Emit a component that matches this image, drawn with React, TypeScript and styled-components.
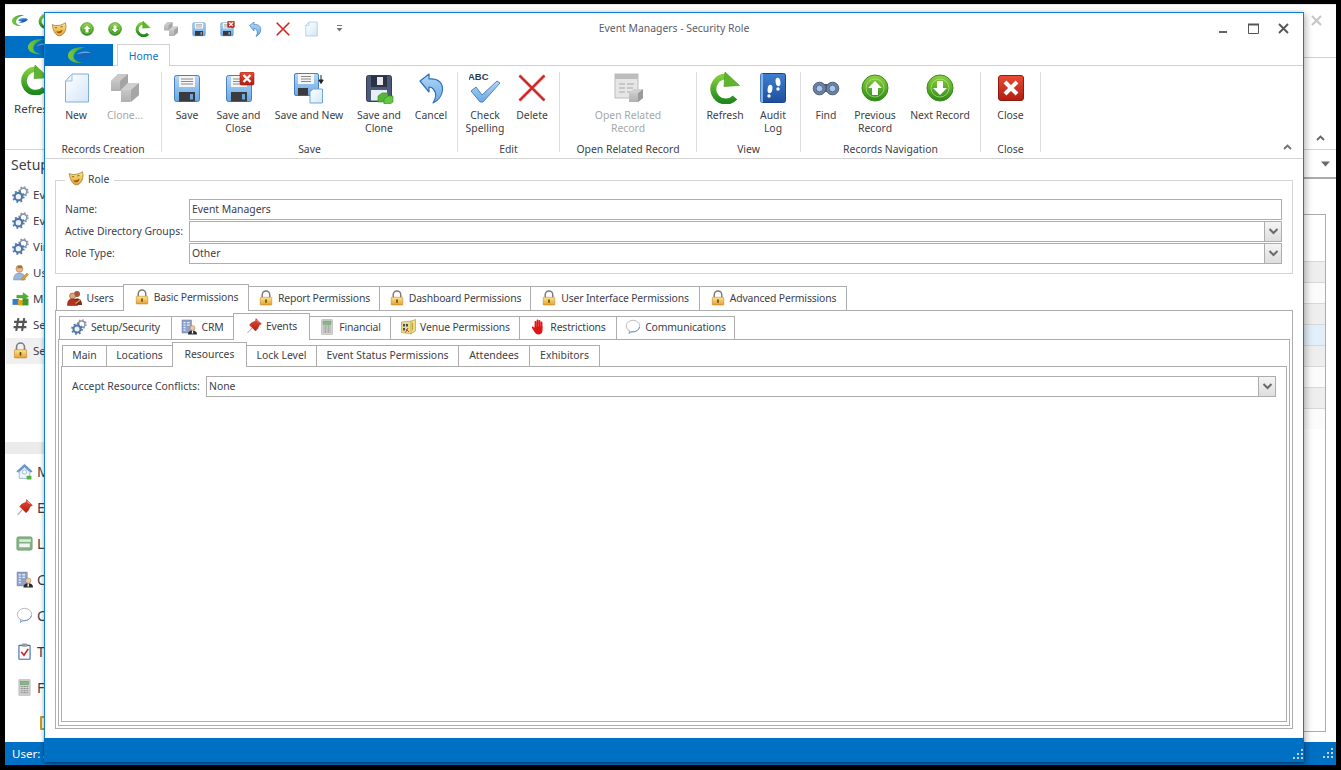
import React from "react";
import styled, { createGlobalStyle } from "styled-components";

const FONT = `"Noto Sans", "Open Sans", Arial, sans-serif`;
const INK = "#3c4048";
const LINE = "#adadad";
const BASE = "10.4px";

const Global = createGlobalStyle`
  html, body { margin: 0; background: #000; height: 100%; overflow: hidden; }
  * { box-sizing: border-box; }
  body { font-family: ${FONT}; font-size: ${BASE}; color: ${INK}; }
`;

/* ---------- icon drawings ---------- */
const Sv: React.FC<{ s?: number; children: React.ReactNode }> = ({ s = 32, children }) => (
  <svg width={s} height={s} viewBox="0 0 32 32" style={{ flex: "none", display: "block" }}>{children}</svg>
);
type IP = { s?: number };

const Gradients = () => (
  <svg width="0" height="0" style={{ position: "absolute" }}>
    <defs>
      <linearGradient id="gGreen" x1="0" y1="0" x2="0" y2="1"><stop offset="0" stopColor="#8ed23f" /><stop offset="1" stopColor="#2b8a17" /></linearGradient>
      <linearGradient id="gArc" x1="0" y1="0" x2="0" y2="1"><stop offset="0" stopColor="#7fce3c" /><stop offset="1" stopColor="#1f8a1c" /></linearGradient>
      <linearGradient id="gBlue" x1="0" y1="0" x2="0" y2="1"><stop offset="0" stopColor="#b4d7f6" /><stop offset="1" stopColor="#6aa8e4" /></linearGradient>
      <linearGradient id="gDeep" x1="0" y1="0" x2="0" y2="1"><stop offset="0" stopColor="#3f7fd0" /><stop offset="1" stopColor="#1d4f9e" /></linearGradient>
      <linearGradient id="gGold" x1="0" y1="0" x2="0" y2="1"><stop offset="0" stopColor="#fde48a" /><stop offset="1" stopColor="#e7a12f" /></linearGradient>
      <linearGradient id="gRed" x1="0" y1="0" x2="0" y2="1"><stop offset="0" stopColor="#ea4b34" /><stop offset="1" stopColor="#b11d10" /></linearGradient>
      <linearGradient id="gPage" x1="0" y1="0" x2="1" y2="1"><stop offset="0" stopColor="#ffffff" /><stop offset="1" stopColor="#d3e6f8" /></linearGradient>
      <linearGradient id="gGray" x1="0" y1="0" x2="0" y2="1"><stop offset="0" stopColor="#d4d4d4" /><stop offset="1" stopColor="#b0b0b0" /></linearGradient>
      <linearGradient id="gLogo" x1="0" y1="0" x2="1" y2="0"><stop offset="0" stopColor="#7ccb35" /><stop offset="1" stopColor="#2c9a4a" /></linearGradient>
    </defs>
  </svg>
);

const LogoMark: React.FC<{ w?: number; eye?: string }> = ({ w = 32, eye = "#1f5fb4" }) => (
  <svg width={w} height={w * 0.72} viewBox="0 0 32 23" style={{ display: "block", flex: "none" }}>
    <path d="M24 .5C12-1.500 0 4 0 12c0 6.500 9 11 22 10.500C12 21 7 17.500 8 12.500 9 7 15 2.500 24 .5z" fill="url(#gLogo)" />
    <path d="M12 10.500C17 6 25 5 32 8.500 28 14.500 20 17 13 14.500c3-.2 5.500-1.300 7-3-2.500.6-5.500.4-8-1z" fill={eye} />
    <path d="M12 10.500C17 6 25 5 32 8.500 26 8 18 8.500 12 10.500z" fill="#5aa8ea" />
  </svg>
);
const IPage = ({ s }: IP) => (
  <Sv s={s}><path d="M5.500 9 12 2H28.500V30H5.500z" fill="url(#gPage)" stroke="#7fb0da" /><path d="M5.500 9 12 2V9z" fill="#e8f2fb" stroke="#9cc3e4" /></Sv>
);
const ICubes = ({ s }: IP) => (
  <Sv s={s}>
    <path d="M2 9 9 2 19 2 19 12 11 19 2 19z" fill="url(#gGray)" />
    <path d="M2 9H11L19 2 9 2z" fill="#c9c9c9" /><path d="M11 9V19L19 12V2z" fill="#a4a4a4" />
    <path d="M12 18 19 11 30 11 30 23 21 30 12 30z" fill="url(#gGray)" />
    <path d="M12 18H22L30 11 19 11z" fill="#cfcfcf" /><path d="M22 18V30L30 23V11z" fill="#a6a6a6" />
  </Sv>
);
const FloppyBase: React.FC<{ dark?: boolean }> = ({ dark }) => (
  <>
    <rect x="3.500" y="3.500" width="25" height="26" rx="2" fill={dark ? "#4c5a78" : "url(#gBlue)"} stroke={dark ? "#333e55" : "#4a80bc"} />
    <rect x="8" y="4" width="16" height="11" fill={dark ? "#2a3245" : "#f5f5f5"} />
    {dark ? <rect x="14" y="5" width="6" height="8" fill="#e8e8e8" /> : <path d="M10 7h12M10 9.500h12M10 12h12" stroke="#8a8a8a" />}
    <rect x="8" y={dark ? 18 : 20} width="16" height={dark ? 10.5 : 9.5} fill={dark ? "#e8eef6" : "#3b3b3e"} />
    {!dark && <rect x="19" y="22" width="3" height="5.500" fill="#6aa7e2" />}
  </>
);
const ISave = ({ s }: IP) => <Sv s={s}><FloppyBase /></Sv>;
const ISaveX = ({ s }: IP) => (
  <Sv s={s}>
    <FloppyBase />
    <rect x="17" y="0" width="14" height="13" rx="1.500" fill="url(#gRed)" stroke="#a01c10" strokeWidth=".6" />
    <path d="M20.500 3 27.500 10M27.500 3 20.500 10" stroke="#fff" strokeWidth="2.400" />
  </Sv>
);
const ISaveNew = ({ s }: IP) => (
  <Sv s={s}>
    <rect x="1.500" y="1.500" width="24" height="22" rx="1.500" fill="url(#gBlue)" stroke="#4a80bc" />
    <rect x="5" y="2" width="16" height="10" fill="#f5f5f5" />
    <path d="M8 4.500h10M8 7h10M8 9.500h10" stroke="#8a8a8a" />
    <rect x="5" y="16" width="10" height="7.500" fill="#3b3b3e" />
    <path d="M17 20 20 17H29.500V31H17z" fill="url(#gPage)" stroke="#6fa6d6" />
    <path d="M28 3 V10M25.800 8 28 11.500 30.200 8z" stroke="#222" fill="#222" strokeWidth="1" />
  </Sv>
);
const ISaveClone = ({ s }: IP) => (
  <Sv s={s}>
    <FloppyBase dark />
    <path d="M15 24l4-3h6v6l-4 3h-6z" fill="#56b53a" stroke="#2f8a1e" strokeWidth=".6" />
    <path d="M21 27l4-3h5v6l-3 2h-6z" fill="#69c545" stroke="#2f8a1e" strokeWidth=".6" />
  </Sv>
);
const IUndo = ({ s }: IP) => (
  <Sv s={s}>
    <path d="M5 9 14 2V7C23 6 28 11 27.500 18 27 24 23 29 18 31 21 26 21.500 21 19 18 17.500 15.500 16 15 14 15V20z" fill="url(#gBlue)" stroke="#2f70b8" strokeWidth="1.200" strokeLinejoin="round" />
  </Sv>
);
const IRedX = ({ s }: IP) => (
  <Sv s={s}>
    <path d="M3.500 3.500 28.500 28.500M28.500 3.500 3.500 28.500" stroke="#7d2020" strokeOpacity=".3" strokeWidth="3.600" />
    <path d="M3.500 3.500 28.500 28.500M28.500 3.500 3.500 28.500" stroke="#d92020" strokeWidth="2.300" />
  </Sv>
);
const ICheckAbc = ({ s }: IP) => (
  <Sv s={s}>
    <text x="-1" y="8" fontFamily="Liberation Sans, sans-serif" fontWeight="700" fontSize="9.500" fill="#2c3a5a">ABC</text>
    <path d="M2 19 7 15 13 23 28 9 31 11 14 30 11 30z" fill="url(#gBlue)" stroke="#3f79b8" strokeWidth=".9" strokeLinejoin="round" />
  </Sv>
);
const IOpenRelated = ({ s }: IP) => (
  <Sv s={s}>
    <rect x="3" y="2" width="23" height="24" fill="#e6e6e6" stroke="#bdbdbd" />
    <rect x="3" y="2" width="23" height="5" fill="#bdbdbd" />
    <path d="M7 12h6M15 12h7M7 16h6M15 16h6M7 20h6M15 20h4" stroke="#a8a8a8" />
    <path d="M17 21 22 17H31V26L26 30H17z" fill="url(#gGray)" />
    <path d="M26 21V30L31 26V17z" fill="#9a9a9a" /><path d="M17 21H26L31 17H22z" fill="#d0d0d0" />
  </Sv>
);
const IRefresh = ({ s }: IP) => (
  <Sv s={s}>
    <path d="M26 25.500A12.500 12.500 0 1 1 17 4.500" fill="none" stroke="url(#gArc)" strokeWidth="6" />
    <path d="M16 0 30.500 13.500 15 14.500z" fill="#5fb52e" stroke="#3f9620" strokeWidth=".6" />
  </Sv>
);
const IAudit = ({ s }: IP) => (
  <Sv s={s}>
    <rect x="3.500" y="1.500" width="25" height="29" rx="2" fill="url(#gDeep)" stroke="#1b4486" />
    <rect x="3.500" y="1.500" width="2.500" height="29" fill="#7fb3ea" />
    <ellipse cx="13" cy="17" rx="2.400" ry="4.200" fill="#fff" transform="rotate(8 13 17)" /><circle cx="12" cy="24" r="1.700" fill="#fff" />
    <ellipse cx="21" cy="10" rx="2.400" ry="4.200" fill="#fff" transform="rotate(-8 21 10)" /><circle cx="21" cy="17" r="1.700" fill="#fff" />
  </Sv>
);
const IFind = ({ s }: IP) => (
  <Sv s={s}>
    <path d="M13 12h6v8h-6z" fill="#4a5a70" />
    <circle cx="9.500" cy="16.500" r="6.300" fill="#6d83a5" stroke="#4e5d78" /><circle cx="9.500" cy="16.500" r="3.400" fill="#a9c7e6" stroke="#53688a" />
    <circle cx="22.500" cy="16.500" r="6.300" fill="#6d83a5" stroke="#4e5d78" /><circle cx="22.500" cy="16.500" r="3.400" fill="#a9c7e6" stroke="#53688a" />
  </Sv>
);
const IArrow: React.FC<IP & { down?: boolean }> = ({ s, down }) => (
  <Sv s={s}>
    <circle cx="16" cy="16" r="13" fill="url(#gGreen)" stroke="#3a8a1c" />
    <circle cx="16" cy="16" r="9" fill="none" stroke="#c8eea0" strokeOpacity=".6" />
    <path d={down ? "M16 23 23 16H19V9H13V16H9z" : "M16 9 23 16H19V23H13V16H9z"} fill="#fff" />
  </Sv>
);
const IClose = ({ s }: IP) => (
  <Sv s={s}>
    <rect x="3.500" y="3.500" width="25" height="25" rx="2.500" fill="url(#gRed)" stroke="#8f1a10" />
    <path d="M10 10 22 22M22 10 10 22" stroke="#fff" strokeWidth="4" />
  </Sv>
);
const ILock = ({ s }: IP) => (
  <Sv s={s}>
    <path d="M8.500 15V9.500a7.500 7.500 0 0 1 15 0V15" fill="none" stroke="#7c7c7c" strokeWidth="3" />
    <rect x="4.500" y="14.500" width="23" height="15.500" rx="1" fill="url(#gGold)" stroke="#b57a1c" />
    <rect x="14.500" y="19" width="3" height="6.500" fill="#5a4010" />
  </Sv>
);
const IMask = ({ s }: IP) => (
  <Sv s={s}>
    <path d="M2.500 7C10 11 20 9 29 3.500 31.500 14 29 25 20 29 11 32.500 4 21 2.500 7z" fill="url(#gGold)" stroke="#8c6a26" strokeWidth="1.300" />
    <path d="M7 13.500q3-2 6 0-3 1.500-6 0zM18 12q3-2.500 6-1-3 2.500-6 1z" fill="#5b4214" />
    <path d="M10 20q6 3 13-3-1 7-7 7.500-4 0-6-4.500z" fill="#8c5f1a" />
  </Sv>
);
const IUsers = ({ s }: IP) => (
  <Sv s={s}>
    <circle cx="20" cy="8" r="6" fill="#a8553a" /><path d="M11 30c0-9 3-13 9-13s10 4 10 13z" fill="#7d2c1e" />
    <circle cx="11" cy="12" r="6" fill="#e3a878" stroke="#7a3b20" /><path d="M1 31c0-10 3-13 10-13s10 4 10 13z" fill="#b5301e" stroke="#6d1a10" />
    <path d="M17 27 26 20" stroke="#d89a3a" strokeWidth="3" />
  </Sv>
);
const IGear = ({ s }: IP) => (
  <Sv s={s}>
    <circle cx="21.500" cy="10.500" r="6.500" fill="none" stroke="#8a98ac" strokeWidth="3" />
    <circle cx="21.500" cy="10.500" r="8.500" fill="none" stroke="#8a98ac" strokeWidth="3" strokeDasharray="3 3.670" />
    <circle cx="12" cy="20" r="7" fill="#eef2f8" stroke="#4f78a8" strokeWidth="4" />
    <circle cx="12" cy="20" r="10" fill="none" stroke="#4f78a8" strokeWidth="3.500" strokeDasharray="3.500 4.350" />
  </Sv>
);
const ICrm = ({ s }: IP) => (
  <Sv s={s}>
    <rect x="2" y="2" width="19" height="26" fill="#8ea2cc" stroke="#6a7a9e" />
    <path d="M5 7h4M12 7h5M5 12h4M12 12h5M5 17h4M5 22h4" stroke="#e6ecf6" strokeWidth="2.500" />
    <circle cx="23" cy="18" r="5" fill="#f2c89c" stroke="#8a6a40" strokeWidth=".8" />
    <path d="M14 31c0-6 4-8 9-8s9 2 9 8z" fill="#2a2a2a" /><path d="M22 23h2l.5 6h-3z" fill="#fff" />
  </Sv>
);
const IPin = ({ s }: IP) => (
  <Sv s={s}>
    <path d="M3 30 12 20" stroke="#a8a8a8" strokeWidth="2" />
    <path d="M20 1 31 12 27 13.500 23.500 21 19 26 7 14 11 9.500 19 6z" fill="url(#gRed)" stroke="#a01812" strokeWidth=".8" />
    <path d="M21 4 26 9" stroke="#f5a090" strokeWidth="2" />
  </Sv>
);
const ICalc = ({ s }: IP) => (
  <Sv s={s}>
    <rect x="5.500" y="1.500" width="21" height="29" fill="#d2d2d2" stroke="#9a9a9a" />
    <rect x="8" y="4" width="16" height="7" fill="#86b682" stroke="#5f8a5c" strokeWidth=".6" />
    <path d="M9 14h14M9 18h14M9 22h14M9 26h14" stroke="#848484" strokeWidth="2" strokeDasharray="2 1" />
  </Sv>
);
const IVenue = ({ s }: IP) => (
  <Sv s={s}>
    <path d="M3 6 22 4 31 1V24L22 30 3 27z" fill="#ecdc84" stroke="#8f8540" />
    <path d="M22 4V30" stroke="#8f8540" />
    <path d="M6 10h4v5H6zM12 10h4v5h-4zM6 18h4v5H6z" fill="#3d4d70" />
    <path d="M12 20l6 6M16 18l-5 9" stroke="#d8352a" strokeWidth="2" />
    <path d="M25 8v14" stroke="#bba63a" strokeWidth="2" />
  </Sv>
);
const IHand = ({ s }: IP) => (
  <Sv s={s}>
    <path d="M11 17V6M15 16V3M19 16V4M23 17V7" stroke="#e01414" strokeWidth="3.600" strokeLinecap="round" />
    <path d="M9 15H25V23C25 28 21 31 17 31 13 31 11 29 9 26L4 18C3 16 5 14 7 16L9 18z" fill="#e01414" />
  </Sv>
);
const IChat = ({ s }: IP) => (
  <Sv s={s}>
    <ellipse cx="16" cy="14" rx="13.500" ry="11.500" fill="#fff" stroke="#a8a8a8" strokeWidth="1.500" />
    <path d="M29 16c-1 6-7 10-14 10-3 0-4 1-7 3 1-2 1-3 0-5" fill="none" stroke="#4a86c4" strokeWidth="1.500" />
  </Sv>
);
const IUserEdit = ({ s }: IP) => (
  <Sv s={s}>
    <circle cx="14" cy="9" r="6.500" fill="#e8b98a" stroke="#9a6a3a" /><path d="M11 4 18 3 19 8 10 8z" fill="#a8702c" />
    <path d="M3 30c0-9 4-13 11-13s11 4 11 13z" fill="#9ab8dc" stroke="#6a8aba" />
    <path d="M17 28 28 17 31 20 20 31z" fill="#e0a030" stroke="#9a6a1a" strokeWidth=".8" />
  </Sv>
);
const IModules = ({ s }: IP) => (
  <Sv s={s}>
    <rect x="1" y="17" width="12" height="11" fill="#2f7fd0" /><rect x="11" y="19" width="11" height="10" fill="#e0a020" />
    <rect x="20" y="16" width="11" height="13" fill="#3f9a2a" />
    <path d="M9 10H21V5L31 12 21 19V15H9z" fill="#50b030" stroke="#2f8a1c" strokeWidth=".7" />
  </Sv>
);
const IHash = ({ s }: IP) => (
  <Sv s={s}><path d="M12 4 8 28M23 4 19 28M4 11H28M3 21H27" stroke="#555" strokeWidth="4" /></Sv>
);
const IHouse = ({ s }: IP) => (
  <Sv s={s}>
    <path d="M1.500 16 16 2.500 30.500 16 27 17 16 7 5 17z" fill="#6a9ad0" stroke="#3f70ae" />
    <path d="M6 17 16 8 26 17V29H6z" fill="#eef4fb" stroke="#5a88be" />
    <circle cx="16" cy="17" r="4" fill="#fff" stroke="#5a88be" />
    <rect x="20" y="24" width="9" height="7" rx="1" fill="#5ab03a" />
  </Sv>
);
const ILicense = ({ s }: IP) => (
  <Sv s={s}>
    <rect x="1.500" y="3.500" width="29" height="25" rx="3" fill="#83b383" stroke="#5f8a5f" />
    <rect x="6" y="8" width="22" height="5" fill="#d8ead8" /><rect x="6" y="16" width="20" height="7" fill="#f3f3f3" />
  </Sv>
);
const IClip = ({ s }: IP) => (
  <Sv s={s}>
    <rect x="5.500" y="4.500" width="21" height="26" rx="1" fill="#f5f8fc" stroke="#3a68a8" strokeWidth="2" />
    <rect x="11" y="1" width="10" height="6" rx="1" fill="#9a9a9a" />
    <path d="M10 17 15 23 23 11" fill="none" stroke="#d42020" strokeWidth="3" />
  </Sv>
);
const Chevron = () => (
  <svg width="11" height="7" viewBox="0 0 11 7" style={{ display: "block" }}>
    <path d="M1.500 1 5.500 5 9.500 1" fill="none" stroke="#6a6a6a" strokeWidth="2" />
  </svg>
);
const Caret: React.FC<{ w?: number; c?: string }> = ({ w = 7, c = "#777" }) => (
  <svg width={w} height={w - 3} viewBox="0 0 7 4" style={{ display: "block" }}><path d="M0 0H7L3.500 4z" fill={c} /></svg>
);
const QuickMenu = () => (
  <svg width="7" height="7" viewBox="0 0 7 7" style={{ display: "block" }}><path d="M1 .5H6" stroke="#777" /><path d="M.5 3H6.500L3.500 6.500z" fill="#777" /></svg>
);
const ChevronUp: React.FC<{ c?: string }> = ({ c = "#707070" }) => (
  <svg width="9" height="6" viewBox="0 0 9 6" style={{ display: "block" }}><path d="M1 5 4.500 1.500 8 5" fill="none" stroke={c} strokeWidth="1.800" /></svg>
);
const Grip = () => (
  <svg width="11" height="11" viewBox="0 0 11 11" style={{ display: "block" }}>
    <path d="M8 0h2v2H8zM4 4h2v2H4zM8 4h2v2H8zM0 8h2v2H0zM4 8h2v2H4zM8 8h2v2H8z" fill="#c4d0da" />
  </svg>
);

/* ---------- background application ---------- */
const Desk = styled.div`
  width: 1341px; height: 770px; padding: 4px 5px 5px; background: #000;
  position: relative; overflow: hidden;
`;
const AppWindow = styled.div`
  height: 100%; width: 1331px; background: #fff; display: flex; flex-direction: column;
  border-top: 1px solid #e6e6e6;
`;
const AppTitleBar = styled.div`
  height: 31px; display: flex; align-items: center; padding: 0 14px 0 7px; gap: 10px; flex: none;
`;
const AppClose = styled.div`
  margin-left: auto; color: #c4c4c4; font-size: 0; line-height: 0;
`;
const AppTabRow = styled.div`
  height: 22px; flex: none; border-bottom: 1px solid #d0d0d0;
`;
const AppLogoTab = styled.div`
  width: 90px; height: 22px; background: #0070c4; display: flex; align-items: center; padding-left: 23px;
`;
const AppRibbon = styled.div`
  height: 92px; flex: none; border-bottom: 1px solid #d4d4d4; display: flex; justify-content: space-between;
  padding: 7px 11px 8px 9px;
`;
const AppRibbonButton = styled.div`
  width: 60px; font-size: 11.5px; display: flex; flex-direction: column; gap: 6px;
  svg { margin-left: 6px; }
`;
const AppRibbonCollapse = styled.div`
  align-self: flex-end;
`;
const AppBody = styled.div`
  flex: 1; display: flex; min-height: 0;
`;
const Sidebar = styled.aside`
  width: 300px; flex: none; display: flex; flex-direction: column;
`;
const SideTitle = styled.div`
  height: 30px; padding-left: 6px; font-size: 14px; line-height: 30px; flex: none; margin-bottom: 2px;
`;
const SideRow = styled.div<{ $on?: boolean }>`
  height: 26px; display: flex; align-items: center; gap: 4px; padding-left: 6px; font-size: 11.5px;
  margin-left: 1px; background: ${(p) => (p.$on ? "#f0f0f0" : "transparent")};
`;
const SideRule = styled.div`
  height: 12px; margin-top: 78px; background: #ebebeb; flex: none;
`;
const NavRow = styled.div`
  height: 36px; display: flex; align-items: center; gap: 4px; padding-left: 11px; font-size: 14px;
`;
const SubNavRow = styled.div`
  height: 37px; display: flex; align-items: center; padding-left: 35px;
`;
const Swatch = styled.span`
  width: 12px; height: 14px; border: 2px solid #c89a2c; border-radius: 1px; background: #fff6cf; display: block;
`;
const ListPane = styled.section`
  flex: 1; display: flex; flex-direction: column; min-width: 0;
`;
const ListHeader = styled.div`
  height: 29px; flex: none; display: flex; align-items: center; justify-content: flex-end; padding: 0 6px 0 0;
  border-bottom: 2px solid #acacac;
`;
const Grid = styled.div`
  flex: 1; margin: 35px 10px 10px 0; border: 1px solid #adadad; border-left: 0; padding-top: 46px; display: flex; flex-direction: column;
`;
const GridRow = styled.div<{ $tone: "gray" | "white" | "blue" }>`
  height: 21px; flex: none; border-top: 1px solid #d8d8d8;
  background: ${(p) => (p.$tone === "gray" ? "#eeeeee" : p.$tone === "blue" ? "#e2effa" : "#fbfbfb")};
`;
const StatusBar = styled.footer`
  height: 23px; flex: none; background: #0070c4; color: #fff; display: flex; align-items: center; justify-content: space-between;
  padding: 0 2px 0 7px; font-size: 11.5px;
`;

/* ---------- floating dialog ---------- */
const Dialog = styled.div`
  position: absolute; left: 44px; top: 12px; width: 1260px; height: 750px;
  background: #fff; border: 1px solid #0f7fd0; border-bottom: 0;
  box-shadow: 2px 2px 7px rgba(0,0,0,.28), -1px 0 3px rgba(0,0,0,.12);
  display: flex; flex-direction: column;
`;
const TitleBar = styled.header`
  height: 31px; flex: none; display: grid; grid-template-columns: 1fr auto 1fr; align-items: center;
`;
const QuickBar = styled.div`
  display: flex; align-items: center;
`;
const QuickCell = styled.div`
  width: 28px; height: 28px; display: flex; align-items: center; justify-content: center;
`;
const Title = styled.div`
  color: #5a5c6a; padding-bottom: 1px;
`;
const WinButtons = styled.div`
  display: flex; justify-content: flex-end; padding-right: 5px;
`;
const WinButton = styled.div`
  width: 30px; height: 28px; display: flex; align-items: center; justify-content: center;
`;
const TabRow = styled.div`
  height: 22px; flex: none; display: flex; gap: 4px; border-bottom: 1px solid #d0d0d0;
`;
const LogoTab = styled.div`
  width: 68px; height: 22px; background: #0070c4; display: flex; align-items: center; justify-content: center;
`;
const HomeTab = styled.div`
  width: 53px; height: 22px; background: #fff; border: 1px solid #d0d0d0; border-bottom: 0; color: #0a72c8;
  display: flex; align-items: center; justify-content: center;
`;
const Ribbon = styled.div`
  height: 93px; flex: none; display: flex; padding: 6px 10px 0 0; border-bottom: 1px solid #d4d4d4;
`;
const Group = styled.div<{ $w: number; $pad: number }>`
  width: ${(p) => p.$w}px; height: 80px; flex: none; border-right: 1px solid #dcdcdc; display: flex; flex-direction: column;
  padding-left: ${(p) => p.$pad}px;
`;
const GroupButtons = styled.div`
  height: 70px; display: flex; flex: none;
`;
const GroupCaption = styled.div<{ $pad: number }>`
  height: 14px; line-height: 15px; margin-left: -${(p) => p.$pad}px; text-align: center; margin-bottom: -4px; white-space: nowrap;
`;
const RButton = styled.div<{ $w: number; $off?: boolean }>`
  width: ${(p) => p.$w}px; flex: none; display: flex; flex-direction: column; align-items: center;
  text-align: center; line-height: 13px; color: ${(p) => (p.$off ? "#a6a6a6" : INK)};
`;
const RIcon = styled.div`
  height: 32px; margin-bottom: 5px; display: flex; align-items: center; justify-content: center;
`;
const RLabel = styled.div`
  white-space: pre-line;
`;
const Collapse = styled.div`
  margin-left: auto; align-self: flex-end; padding-bottom: 8px; margin-right: 1px;
`;
const Content = styled.div`
  flex: 1; min-height: 0; display: flex; flex-direction: column; padding: 11px 10px 9px 10px;
`;
const RoleBox = styled.fieldset`
  margin: 0; padding: 9px 10px 9px 9px; border: 1px solid #d4d4d4; flex: none; min-width: 0;
  display: grid; grid-template-columns: 124px 1fr; row-gap: 1px; align-items: center;
`;
const RoleLegend = styled.legend`
  display: flex; align-items: flex-start; gap: 4px; padding: 0 5px 0 3px; height: 20px; line-height: 19px;
`;
const Label = styled.label`
  white-space: nowrap; padding-bottom: 2px;
`;
const Field = styled.div`
  height: 21px; border: 1px solid ${LINE}; background: #fff; display: flex; align-items: flex-start; justify-content: space-between;
  padding-left: 2px; line-height: 19px;
`;
const DropButton = styled.div`
  width: 17px; height: 19px; background: linear-gradient(#f4f4f4, #dedede); border-left: 1px solid ${LINE};
  display: flex; align-items: center; justify-content: center;
`;
const TabSet = styled.div<{ $top?: number }>`
  display: flex; flex-direction: column; flex: 1; min-height: 0; min-width: 0;
  margin-top: ${(p) => p.$top ?? 0}px;
`;
const Strip = styled.div<{ $h: number; $pad: number }>`
  height: ${(p) => p.$h}px; flex: none; display: flex; align-items: flex-end; padding-left: ${(p) => p.$pad}px;
`;
const Tab = styled.div<{ $w: number; $h: number; $on?: boolean; $lift: number; $track: number }>`
  width: ${(p) => p.$w + 1}px; margin-right: -1px; flex: none;
  height: ${(p) => p.$h}px; margin-bottom: ${(p) => (p.$on ? -1 : 0)}px;
  ${(p) => (p.$on ? "position: relative; z-index: 2;" : "")}
  background: #fff; border: 1px solid ${LINE}; border-bottom: 0; padding-bottom: ${(p) => p.$lift}px;
  letter-spacing: ${(p) => p.$track}px;
  display: flex; align-items: center; justify-content: center; gap: 4px; white-space: nowrap;
`;
const Panel = styled.div<{ $pt: number; $pb: number; $px: number }>`
  flex: 1; min-height: 0; border: 1px solid ${LINE}; display: flex; flex-direction: column;
  padding: ${(p) => p.$pt}px ${(p) => p.$px}px ${(p) => p.$pb}px;
`;
const ConflictRow = styled.div`
  display: grid; grid-template-columns: 134px 1fr; align-items: center; padding: 9px 10px 0;
`;
const DialogStatus = styled.footer`
  height: 24px; flex: none; margin: 0 -1px; background: #0070c4; display: flex; align-items: flex-end; justify-content: flex-end;
  padding: 0 0 2px 0; box-shadow: 0 1px 2px rgba(0,0,0,.3);
`;

/* ---------- data ---------- */
type Btn = { l: string; w: number; i: React.ReactNode; off?: boolean };
const groups: { cap: string; w: number; pad: number; items: Btn[] }[] = [
  { cap: "Records Creation", w: 117, pad: 12, items: [
    { l: "New", w: 38, i: <IPage /> },
    { l: "Clone...", w: 60, i: <ICubes />, off: true } ] },
  { cap: "Save", w: 296, pad: 6, items: [
    { l: "Save", w: 38, i: <ISave /> },
    { l: "Save and\nClose", w: 65, i: <ISaveX /> },
    { l: "Save and New", w: 76, i: <ISaveNew /> },
    { l: "Save and\nClone", w: 64, i: <ISaveClone /> },
    { l: "Cancel", w: 40, i: <IUndo /> } ] },
  { cap: "Edit", w: 102, pad: 3, items: [
    { l: "Check\nSpelling", w: 48, i: <ICheckAbc /> },
    { l: "Delete", w: 46, i: <IRedX /> } ] },
  { cap: "Open Related Record", w: 137, pad: 0, items: [
    { l: "Open Related\nRecord", w: 136, i: <IOpenRelated />, off: true } ] },
  { cap: "View", w: 104, pad: 3, items: [
    { l: "Refresh", w: 50, i: <IRefresh /> },
    { l: "Audit\nLog", w: 46, i: <IAudit /> } ] },
  { cap: "Records Navigation", w: 180, pad: 3, items: [
    { l: "Find", w: 44, i: <IFind /> },
    { l: "Previous\nRecord", w: 54, i: <IArrow /> },
    { l: "Next Record", w: 76, i: <IArrow down /> } ] },
  { cap: "Close", w: 60, pad: 0, items: [
    { l: "Close", w: 59, i: <IClose /> } ] },
];
type T = { l: string; w: number; i?: React.ReactNode; on?: boolean };
const tabs1: T[] = [
  { l: "Users", w: 67, i: <IUsers s={16} /> },
  { l: "Basic Permissions", w: 125, i: <ILock s={16} />, on: true },
  { l: "Report Permissions", w: 131, i: <ILock s={16} /> },
  { l: "Dashboard Permissions", w: 151, i: <ILock s={16} /> },
  { l: "User Interface Permissions", w: 169, i: <ILock s={16} /> },
  { l: "Advanced Permissions", w: 147, i: <ILock s={16} /> },
];
const tabs2: T[] = [
  { l: "Setup/Security", w: 112, i: <IGear s={16} /> },
  { l: "CRM", w: 62, i: <ICrm s={16} /> },
  { l: "Events", w: 76, i: <IPin s={16} />, on: true },
  { l: "Financial", w: 81, i: <ICalc s={16} /> },
  { l: "Venue Permissions", w: 129, i: <IVenue s={16} /> },
  { l: "Restrictions", w: 97, i: <IHand s={16} /> },
  { l: "Communications", w: 118, i: <IChat s={16} /> },
];
const tabs3: T[] = [
  { l: "Main", w: 44 },
  { l: "Locations", w: 66 },
  { l: "Resources", w: 74, on: true },
  { l: "Lock Level", w: 70 },
  { l: "Event Status Permissions", w: 142 },
  { l: "Attendees", w: 71 },
  { l: "Exhibitors", w: 70 },
];
const quick = [
  <IMask s={16} />, <IArrow s={16} />, <IArrow s={16} down />, <IRefresh s={16} />, <ICubes s={16} />,
  <ISave s={16} />, <ISaveX s={16} />, <IUndo s={16} />, <IRedX s={16} />, <IPage s={16} />, <QuickMenu />,
];
const sideItems: [React.ReactNode, string][] = [
  [<IGear s={17} />, "Ev"], [<IGear s={17} />, "Ev"], [<IGear s={17} />, "Vir"],
  [<IUserEdit s={17} />, "Us"], [<IModules s={17} />, "Mo"], [<IHash s={17} />, "Se"], [<ILock s={17} />, "Se"],
];
const navItems: [React.ReactNode, string][] = [
  [<IHouse s={17} />, "M"], [<IPin s={17} />, "E"], [<ILicense s={17} />, "L"], [<ICrm s={17} />, "C"],
  [<IChat s={17} />, "C"], [<IClip s={17} />, "T"], [<ICalc s={17} />, "F"],
];
const rows: ("gray" | "white" | "blue")[] = ["gray", "white", "gray", "blue", "gray", "white", "gray", "white"];

const TabBar: React.FC<{ tabs: T[]; stripH: number; tabH: number; onH: number; pad: number; lift: number; onLift: number; track: number }> = ({ tabs, stripH, tabH, onH, pad, lift, onLift, track }) => (
  <Strip $h={stripH} $pad={pad}>
    {tabs.map((t) => (
      <Tab key={t.l} $w={t.w} $h={t.on ? onH : tabH} $on={t.on} $lift={t.on ? onLift : lift} $track={track}>{t.i}<span>{t.l}</span></Tab>
    ))}
  </Strip>
);

export default function App() {
  return (
    <Desk>
      <Global />
      <Gradients />
      <AppWindow>
        <AppTitleBar>
          <LogoMark w={16} />
          <IRefresh s={16} />
          <AppClose>
            <svg width="11" height="11" viewBox="0 0 11 11"><path d="M1 1 10 10M10 1 1 10" stroke="#c6c6c6" strokeWidth="2" /></svg>
          </AppClose>
        </AppTitleBar>
        <AppTabRow>
          <AppLogoTab><LogoMark w={22} /></AppLogoTab>
        </AppTabRow>
        <AppRibbon>
          <AppRibbonButton>
            <IRefresh s={30} />
            <span>Refres</span>
          </AppRibbonButton>
          <AppRibbonCollapse><ChevronUp c="#666" /></AppRibbonCollapse>
        </AppRibbon>
        <AppBody>
          <Sidebar>
            <SideTitle>Setup</SideTitle>
            {sideItems.map(([icon, label], i) => (
              <SideRow key={i} $on={i === 6}>{icon}<span>{label}</span></SideRow>
            ))}
            <SideRule />
            {navItems.map(([icon, label], i) => (
              <NavRow key={i}>{icon}<span>{label}</span></NavRow>
            ))}
            <SubNavRow><Swatch /></SubNavRow>
          </Sidebar>
          <ListPane>
            <ListHeader><Caret w={9} c="#6a6a6a" /></ListHeader>
            <Grid>
              {rows.map((t, i) => <GridRow key={i} $tone={t} />)}
            </Grid>
          </ListPane>
        </AppBody>
        <StatusBar><span>User: A</span><Grip /></StatusBar>
      </AppWindow>

      <Dialog>
        <TitleBar>
          <QuickBar>
            {quick.map((q, i) => <QuickCell key={i}>{q}</QuickCell>)}
          </QuickBar>
          <Title>Event Managers - Security Role</Title>
          <WinButtons>
            <WinButton><svg width="10" height="10" viewBox="0 0 10 10"><path d="M1 8H9" stroke="#666" strokeWidth="2" /></svg></WinButton>
            <WinButton><svg width="11" height="11" viewBox="0 0 11 11"><path d="M.5 1.500H10.500V10.500H.5z" fill="none" stroke="#555" /><path d="M0 1.500H11" stroke="#555" strokeWidth="2" /></svg></WinButton>
            <WinButton><svg width="11" height="11" viewBox="0 0 11 11"><path d="M1 1 10 10M10 1 1 10" stroke="#555" strokeWidth="1.800" /></svg></WinButton>
          </WinButtons>
        </TitleBar>
        <TabRow>
          <LogoTab><LogoMark w={23} /></LogoTab>
          <HomeTab>Home</HomeTab>
        </TabRow>
        <Ribbon>
          {groups.map((g) => (
            <Group key={g.cap} $w={g.w} $pad={g.pad}>
              <GroupButtons>
                {g.items.map((b) => (
                  <RButton key={b.l} $w={b.w} $off={b.off}>
                    <RIcon>{b.i}</RIcon>
                    <RLabel>{b.l}</RLabel>
                  </RButton>
                ))}
              </GroupButtons>
              <GroupCaption $pad={g.pad}>{g.cap}</GroupCaption>
            </Group>
          ))}
          <Collapse><ChevronUp /></Collapse>
        </Ribbon>
        <Content>
          <RoleBox>
            <RoleLegend><IMask s={16} /><span>Role</span></RoleLegend>
            <Label>Name:</Label>
            <Field>Event Managers</Field>
            <Label>Active Directory Groups:</Label>
            <Field><span /><DropButton><Chevron /></DropButton></Field>
            <Label>Role Type:</Label>
            <Field>Other<DropButton><Chevron /></DropButton></Field>
          </RoleBox>
          <TabSet $top={10}>
            <TabBar tabs={tabs1} stripH={26} tabH={24} onH={27} pad={1} lift={1} onLift={3} track={-0.15} />
            <Panel $pt={2} $pb={2} $px={2}>
              <TabSet>
                <TabBar tabs={tabs2} stripH={26} tabH={23} onH={27} pad={1} lift={3} onLift={3} track={-0.15} />
                <Panel $pt={2} $pb={3} $px={2}>
                  <TabSet>
                    <TabBar tabs={tabs3} stripH={24} tabH={21} onH={25} pad={1} lift={3} onLift={3} track={0} />
                    <Panel $pt={0} $pb={0} $px={0}>
                      <ConflictRow>
                        <Label>Accept Resource Conflicts:</Label>
                        <Field>None<DropButton><Chevron /></DropButton></Field>
                      </ConflictRow>
                    </Panel>
                  </TabSet>
                </Panel>
              </TabSet>
            </Panel>
          </TabSet>
        </Content>
        <DialogStatus><Grip /></DialogStatus>
      </Dialog>
    </Desk>
  );
}
